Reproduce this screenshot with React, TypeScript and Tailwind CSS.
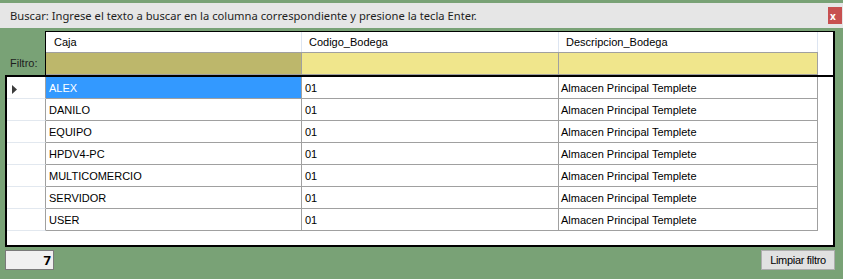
const rows = [
  "ALEX",
  "DANILO",
  "EQUIPO",
  "HPDV4-PC",
  "MULTICOMERCIO",
  "SERVIDOR",
  "USER",
];

const ui = { fontFamily: '"Noto Sans", "Liberation Sans", sans-serif' };
const grid = { fontFamily: '"Liberation Sans", Arial, sans-serif' };

export default function App() {
  return (
    <div className="w-[843px] h-[279px] bg-[#79a276] overflow-hidden flex flex-col pt-[3px]" style={ui}>
      {/* title bar */}
      <div className="h-[25px] bg-[#e6e6e6] flex items-center justify-between pl-[10px] pr-[1px]">
        <span className="text-[11.2px] text-[#1e1e1e] leading-none whitespace-nowrap">
          Buscar: Ingrese el texto a buscar en la columna correspondiente y presione la tecla Enter.
        </span>
        <div className="w-[14px] h-[17px] bg-[#c75050] text-white text-[10px] font-bold flex items-center pl-[2px] leading-none">
          x
        </div>
      </div>

      {/* header + filter */}
      <div className="mt-[3px] flex h-[44px]">
        <div className="w-[45px] flex items-end pl-[10px] pb-[6px] text-[11px] text-[#1e1e1e] leading-none whitespace-nowrap" style={grid}>
          Filtro:
        </div>
        <div className="w-[790px] bg-white border-t border-l border-r-2 border-black flex flex-col" style={grid}>
          <div className="h-[20px] flex text-[11px] text-black">
            <div className="w-[256px] border-r border-[#dde5f1] flex items-center pl-[8px]">Caja</div>
            <div className="w-[257px] border-r border-[#dde5f1] flex items-center pl-[7px]">Codigo_Bodega</div>
            <div className="w-[259px] border-r border-[#dde5f1] flex items-center pl-[7px]">Descripcion_Bodega</div>
          </div>
          <div className="h-[23px] flex">
            <div className="w-[256px] bg-[#bdb76b] border-y border-r border-[#a0a0a0]" />
            <div className="w-[257px] bg-[#f0e68c] border-y border-r border-[#a0a0a0]" />
            <div className="w-[259px] bg-[#f0e68c] border-y border-r border-[#a0a0a0]" />
          </div>
        </div>
      </div>

      {/* grid */}
      <div className="ml-[5px] w-[830px] h-[172px] bg-white border-2 border-black flex flex-col" style={grid}>
        {rows.map((caja, i) => (
          <div key={caja} className="h-[22px] flex text-[11px] text-black">
            <div className="w-[39px] border-r border-r-[#a0a0a0] border-b border-b-[#e2e8ef] flex items-center pl-[5px] pt-[4px]">
              {i === 0 && (
                <svg width="5" height="9" viewBox="0 0 5 9">
                  <path d="M0 0 L5 4.5 L0 9 Z" fill="#3c3c3c" />
                </svg>
              )}
            </div>
            <div
              className={
                i === 0
                  ? "w-[256px] bg-[#3399ff] text-white border-r border-b border-[#a0a0a0] flex items-center pl-[3px] pt-[1px]"
                  : "w-[256px] border-r border-b border-[#a0a0a0] flex items-center pl-[3px] pt-[1px]"
              }
            >
              {caja}
            </div>
            <div className="w-[257px] border-r border-b border-[#a0a0a0] flex items-center pl-[3px] pt-[1px]">01</div>
            <div className="w-[259px] border-r border-b border-[#a0a0a0] flex items-center pl-[2px] pt-[1px]">
              Almacen Principal Templete
            </div>
          </div>
        ))}
      </div>

      {/* footer */}
      <div className="mt-[3px] flex justify-between pl-[5px] pr-[8px]">
        <div className="w-[49px] h-[20px] bg-[#f0f0f0] border border-[#7a7a7a] flex items-center justify-end pr-[2px] text-[13px] font-bold text-black leading-none">
          7
        </div>
        <button
          className="w-[74px] h-[20px] bg-[#e1e1e1] border border-[#adadad] text-[11px] tracking-[-0.3px] text-black leading-none whitespace-nowrap flex items-center justify-center"
          style={grid}
        >
          Limpiar filtro
        </button>
      </div>
    </div>
  );
}
